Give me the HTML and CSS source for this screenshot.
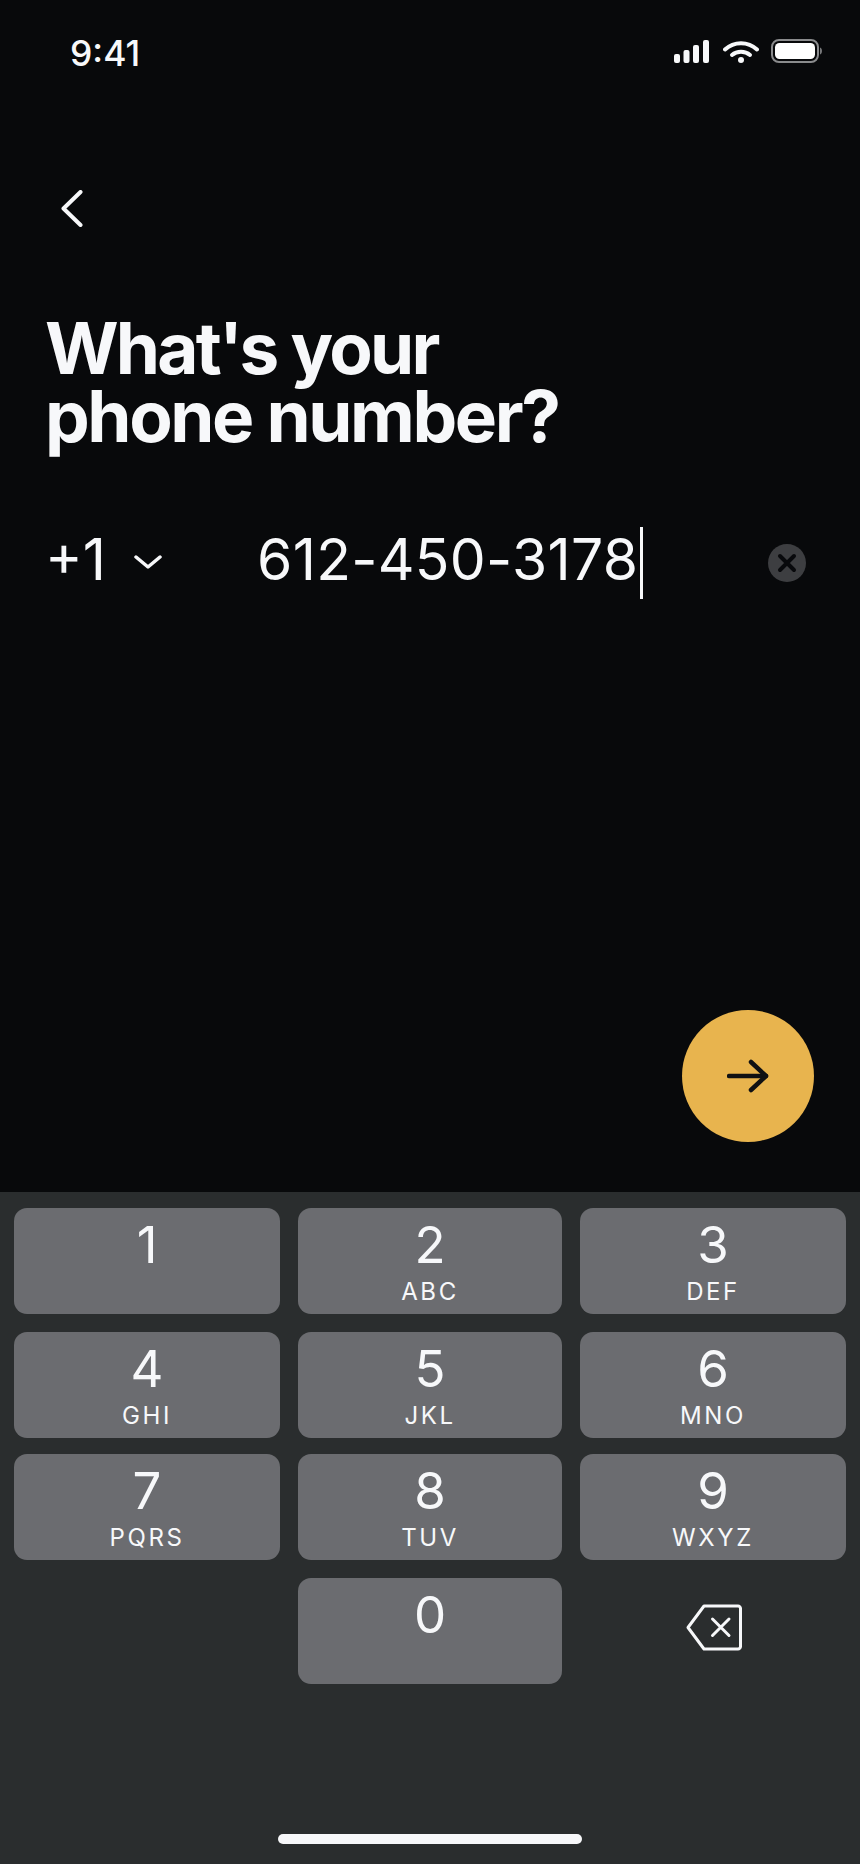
FILE: index.html
```html
<!DOCTYPE html>
<html lang="en">
<head>
<meta charset="utf-8">
<title>Phone number</title>
<link rel="stylesheet" href="styles.css">
</head>
<body>
<div class="screen">
  <header class="status">
    <span class="time">9:41</span>
    <div class="status-icons">
      <svg class="signal" width="35" height="23" viewBox="0 0 35 23" fill="#f7f8fa"><rect x="0" y="14" width="6" height="9" rx="2"/><rect x="9.5" y="10" width="6" height="13" rx="2"/><rect x="19" y="5" width="6" height="18" rx="2"/><rect x="29" y="0" width="6" height="23" rx="2"/></svg>
      <svg class="wifi" width="36" height="22" viewBox="0 0 36 22" fill="none" stroke="#f7f8fa" stroke-width="4" stroke-linecap="round"><path d="M2 8.5C11 0 25 0 34 8.5"/><path d="M9 14C14 9.7 22 9.7 27 14"/><circle cx="18" cy="19" r="3" fill="#f7f8fa" stroke="none"/></svg>
      <svg class="battery" width="51" height="24" viewBox="0 0 51 24"><rect x="1" y="1" width="46" height="22" rx="7" fill="none" stroke="#8a8b8d" stroke-width="2"/><rect x="4" y="4" width="40" height="16" rx="4.5" fill="#fff"/><path d="M49 8.5c1.300.4 2 1.800 2 3.500s-.7 3.100-2 3.500z" fill="#77787a"/></svg>
    </div>
  </header>

  <button class="back" type="button" aria-label="Back">
    <svg width="22" height="37" viewBox="0 0 22 37" fill="none" stroke="#f7f8fa" stroke-width="4" stroke-linecap="round" stroke-linejoin="round"><path d="M19.500 2 2.500 18.500 19.500 35"/></svg>
  </button>

  <h1 class="title"><span class="line-one">What's your</span><br><span class="line-two">phone number?</span></h1>

  <div class="phone-row">
    <span class="code">+1</span>
    <svg class="caret-down" width="28" height="14" viewBox="0 0 28 14" fill="none" stroke="#f7f8fa" stroke-width="3.500" stroke-linecap="round" stroke-linejoin="round"><path d="M2 2 14 12 26 2"/></svg>
    <span class="number">612-450-3178</span>
    <span class="cursor"></span>
    <span class="clear">
      <svg width="20" height="20" viewBox="0 0 20 20" fill="none" stroke="#08090c" stroke-width="4" stroke-linecap="round"><path d="M3 3 17 17M17 3 3 17"/></svg>
    </span>
  </div>

  <div class="spacer"></div>

  <div class="fab-row">
    <button class="fab" type="button" aria-label="Next">
      <svg width="42" height="34" viewBox="0 0 42 34" fill="none" stroke="#101113" stroke-width="4.500" stroke-linecap="round" stroke-linejoin="round"><path d="M2 17H39"/><path d="M24 3 39 17 24 31"/></svg>
    </button>
  </div>

  <section class="keyboard">
    <div class="keys">
      <div class="key"><span class="digit">1</span></div>
      <div class="key"><span class="digit">2</span><span class="letters">ABC</span></div>
      <div class="key"><span class="digit">3</span><span class="letters">DEF</span></div>
      <div class="key"><span class="digit">4</span><span class="letters">GHI</span></div>
      <div class="key"><span class="digit">5</span><span class="letters">JKL</span></div>
      <div class="key"><span class="digit">6</span><span class="letters">MNO</span></div>
      <div class="key"><span class="digit">7</span><span class="letters">PQRS</span></div>
      <div class="key"><span class="digit">8</span><span class="letters">TUV</span></div>
      <div class="key"><span class="digit">9</span><span class="letters">WXYZ</span></div>
      <div class="blank"></div>
      <div class="key"><span class="digit">0</span></div>
      <div class="delete">
        <svg width="56" height="47" viewBox="0 0 56 47" fill="none" stroke="#f7f8fa" stroke-width="3" stroke-linecap="round" stroke-linejoin="round"><path d="M18 2H52A2.500 2.500 0 0 1 54.500 4.500V42.500A2.500 2.500 0 0 1 52 45H18L2 23.500Z"/><path d="M26.500 15 43 31.500M43 15 26.500 31.500"/></svg>
      </div>
    </div>
    <div class="home-bar"></div>
  </section>
</div>
</body>
</html>
```
FILE: styles.css
```css
* { box-sizing: border-box; }
html, body { margin: 0; padding: 0; }
body {
  background: #08090b;
  color: #f7f8fa;
  font-family: Inter, "Liberation Sans", sans-serif;
}
.screen {
  width: 860px;
  height: 1864px;
  display: flex;
  flex-direction: column;
  overflow: hidden;
}
.status {
  height: 80px;
  padding: 36px 38px 0 70px;
  display: flex;
  justify-content: space-between;
  align-items: flex-start;
}
.time {
  font-size: 35.500px;
  line-height: 36px;
  font-weight: 500;
}
.status-icons {
  display: flex;
  align-items: flex-end;
  height: 24px;
  margin-top: 3px;
  gap: 14px;
}
.wifi { margin-right: -2px; }
.back {
  display: block;
  align-self: flex-start;
  margin: 110px 0 0 61px;
  padding: 0;
  border: 0;
  background: none;
  height: 37px;
}
.title {
  margin: 87px 0 0 45px;
  font-size: 71px;
  line-height: 68px;
  font-weight: 700;
}
.line-one { letter-spacing: -2.800px; }
.line-two { letter-spacing: -2.400px; }
.phone-row {
  margin-top: 77px;
  height: 72px;
  padding: 0 54px 0 45px;
  display: flex;
  align-items: center;
  font-size: 57px;
  font-weight: 400;
}
.code { width: 89px; margin-bottom: 7px; }
.caret-down { margin-right: 95px; margin-bottom: 3px; }
.number { letter-spacing: .3px; margin-bottom: 7px; }
.cursor {
  width: 3px;
  height: 72px;
  background: #f7f8fa;
  margin-left: 2px;
}
.clear {
  margin-left: auto;
  width: 38px;
  height: 38px;
  border-radius: 50%;
  background: #3d3e41;
  display: flex;
  align-items: center;
  justify-content: center;
}
.spacer { flex: 1; }
.fab-row {
  display: flex;
  justify-content: flex-end;
  padding: 0 46px 50px 0;
}
.fab {
  width: 132px;
  height: 132px;
  border: 0;
  padding: 0;
  border-radius: 50%;
  background: #e8b44e;
  display: flex;
  align-items: center;
  justify-content: center;
}
.keyboard {
  height: 672px;
  background: #2a2d2e;
  padding: 16px 14px 0;
  position: relative;
}
.keys {
  display: grid;
  grid-template-columns: 266px 264px 266px;
  grid-template-rows: 124px 122px 124px 106px;
  column-gap: 18px;
}
.key {
  height: 106px;
  border-radius: 13px;
  background: #6b6c70;
  display: flex;
  flex-direction: column;
  align-items: center;
  padding-top: 12px;
}
.digit {
  font-size: 51px;
  line-height: 50px;
  font-weight: 400;
}
.letters {
  margin-top: 10px;
  font-size: 24px;
  line-height: 24px;
  letter-spacing: 2.600px;
  font-weight: 400;
}
.delete {
  height: 106px;
  padding-bottom: 8px;
  display: flex;
  align-items: center;
  justify-content: center;
}
.delete svg { margin-left: 1px; }
.home-bar {
  position: absolute;
  left: 278px;
  bottom: 20px;
  width: 304px;
  height: 10px;
  border-radius: 5px;
  background: #f7f8fa;
}
```
